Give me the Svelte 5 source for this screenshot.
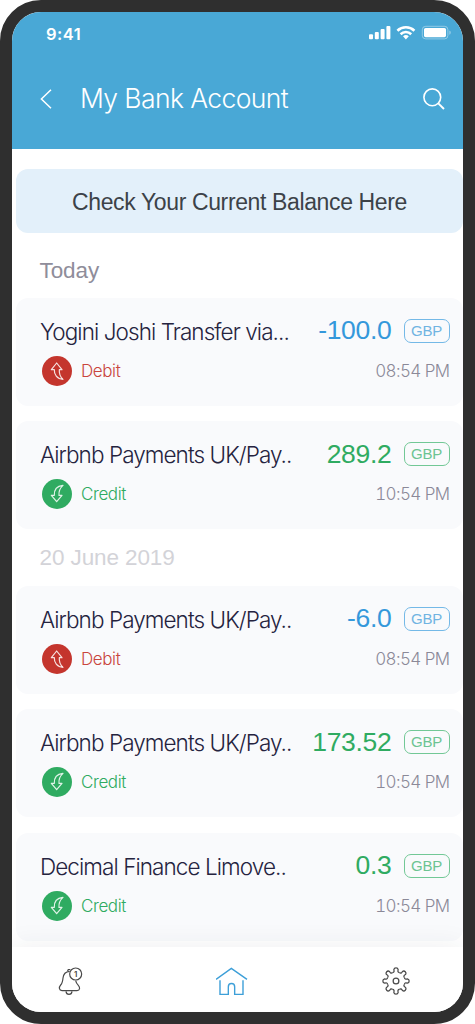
<script lang="ts">
  type Transaction = {
    name: string;
    kind: 'debit' | 'credit';
    amount: string;
    time: string;
  };

  const groups: { label: string; items: Transaction[] }[] = [
    {
      label: 'Today',
      items: [
        { name: 'Yogini Joshi Transfer via...', kind: 'debit', amount: '-100.0', time: '08:54 PM' },
        { name: 'Airbnb Payments UK/Pay..', kind: 'credit', amount: '289.2', time: '10:54 PM' },
      ],
    },
    {
      label: '20 June 2019',
      items: [
        { name: 'Airbnb Payments UK/Pay..', kind: 'debit', amount: '-6.0', time: '08:54 PM' },
        { name: 'Airbnb Payments UK/Pay..', kind: 'credit', amount: '173.52', time: '10:54 PM' },
        { name: 'Decimal Finance Limove..', kind: 'credit', amount: '0.3', time: '10:54 PM' },
      ],
    },
  ];

  const teeth = [0, 45, 90, 135, 180, 225, 270, 315];
</script>

<div class="phone">
  <header>
    <div class="status">
      <span class="clock">9:41</span>
      <svg width="84" height="16" viewBox="0 0 84 16" fill="#fff">
        <rect x="0" y="9.2" width="4" height="5" rx="1" />
        <rect x="5.8" y="7" width="4" height="7.2" rx="1" />
        <rect x="11.6" y="4" width="4" height="10.2" rx="1" />
        <rect x="17.4" y="1" width="4" height="13.2" rx="1" />
        <g fill="none" stroke="#fff" stroke-width="2.6">
          <path d="M28.4 5.7a12.3 12.3 0 0 1 17 0" />
          <path d="M31.6 9.2a7.6 7.6 0 0 1 10.6 0" />
        </g>
        <path d="M34 11.3a4.4 4.4 0 0 1 5.8 0L36.9 14.4z" />
        <rect x="53.3" y="1.3" width="25.6" height="12.6" rx="3.4" fill="none" stroke="#fff" stroke-opacity="0.4" />
        <rect x="55" y="3" width="22" height="9.2" rx="1.6" />
        <path d="M80.4 5.6c1.8.6 1.8 3.6 0 4.2z" fill-opacity="0.45" />
      </svg>
    </div>
    <div class="title-bar">
      <svg class="back" width="12" height="20" viewBox="0 0 12 20">
        <path d="M11 0.8L1.4 10L11 19.2" fill="none" stroke="#fff" stroke-width="1.5" />
      </svg>
      <h1>My Bank Account</h1>
      <svg width="22" height="22" viewBox="0 0 22 22" fill="none" stroke="#fff" stroke-width="1.6">
        <circle cx="9.3" cy="9.3" r="8.4" />
        <path d="M15.3 15.3L21 21" stroke-width="1.9" />
      </svg>
    </div>
  </header>

  <main>
    <button class="balance">Check Your Current Balance Here</button>

    {#each groups as group, i}
      <h2 class:older={i > 0}>{group.label}</h2>
      <div class="list">
        {#each group.items as item}
          <article class={item.kind}>
            <div class="row top">
              <span class="name">{item.name}</span>
              <span class="amount">{item.amount}</span>
              <span class="currency">GBP</span>
            </div>
            <div class="row bottom">
              <svg width="30" height="30" viewBox="0 0 90 90">
                <circle cx="45" cy="45" r="45" fill="currentColor" />
                {#if item.kind === 'debit'}
                  <path class="arrow" d="M44 21L28 41H37C36 55 45 69 63 70C55 63 51 52 52 41H60Z" />
                {:else}
                  <path class="arrow" d="M44 68L28 49H37C36 33 44 21 63 19C54 27 50 38 51 49H60Z" />
                {/if}
              </svg>
              <span class="kind">{item.kind === 'debit' ? 'Debit' : 'Credit'}</span>
              <time>{item.time}</time>
            </div>
          </article>
        {/each}
      </div>
    {/each}
  </main>

  <nav>
    <button aria-label="Notifications">
      <svg width="26" height="30" viewBox="176 126 78 90" fill="none" stroke="#4a4a4a" stroke-width="3.6">
        <path d="M211 142C200 143 192 151 191 162C190 174 189 178 184 183C178 190 179 200 188 200H233C242 200 243 190 237 184C232 179 230 176 229 170" />
        <path d="M205 142C205 136 209 136 213 137" />
        <path d="M200 202C201 214 217 214 218 202" />
        <circle cx="229" cy="150" r="18" />
        <text x="229" y="159" text-anchor="middle">1</text>
      </svg>
    </button>
    <button aria-label="Home">
      <svg width="32" height="30" viewBox="140 126 96 90" fill="none" stroke="#3d9fd8" stroke-width="4.2">
        <path d="M140 166L186 133L233 166" />
        <path d="M152 169V211H177V188a9.5 9.5 0 0 1 19 0V211H221V169" />
      </svg>
    </button>
    <button aria-label="Settings">
      <svg width="30" height="30" viewBox="-45 -45 90 90" fill="none" stroke="#4a4a4a" stroke-width="3.8">
        {#each teeth as angle}
          <path d="M-10.5 -25.4C-5.5 -25.5 -5 -28.5 -6.5 -34A6.6 6.6 0 0 1 6.5 -34C5 -28.5 5.5 -25.5 10.5 -25.4" transform="rotate({angle})" />
        {/each}
        <circle r="8.6" />
      </svg>
    </button>
  </nav>
</div>

<style>
  :global(body) {
    background: #fff;
  }

  .phone {
    display: flex;
    flex-direction: column;
    box-sizing: border-box;
    width: 475px;
    height: 1024px;
    border: 12px solid #2f2f2f;
    border-radius: 41px;
    overflow: hidden;
    background: #fff;
    font-family: Inter, 'Liberation Sans', sans-serif;
    font-weight: 300;
  }

  header {
    flex: none;
    box-sizing: border-box;
    height: 136.5px;
    background: #49a8d6;
    color: #fff;
  }

  .status {
    display: flex;
    align-items: center;
    justify-content: space-between;
    height: 44px;
    padding: 0 10px 0 34px;
  }

  .status svg {
    margin-bottom: 3px;
  }

  .clock {
    font-size: 16.5px;
    font-weight: 600;
    letter-spacing: 0.5px;
  }

  .title-bar {
    display: flex;
    align-items: center;
    height: 85px;
    padding: 0 18px 0 28px;
  }

  .title-bar svg {
    flex: none;
  }

  h1 {
    flex: 1;
    margin: 0 0 2px 28px;
    font-size: 26.5px;
    font-weight: 300;
    letter-spacing: -0.6px;
    white-space: nowrap;
  }

  main {
    flex: 1;
    min-height: 0;
    overflow: hidden;
    padding: 20.5px 0 0 4px;
  }

  button {
    padding: 0;
    border: none;
    background: none;
    font-family: inherit;
  }

  .balance {
    display: block;
    width: 100%;
    height: 64px;
    padding-top: 2px;
    border-radius: 12px;
    background: #e3f0fa;
    color: #3c4248;
    font-family: 'Liberation Sans', sans-serif;
    font-size: 23px;
    letter-spacing: -0.37px;
  }

  h2 {
    margin: 0;
    padding: 6px 0 0 23.5px;
    height: 58.5px;
    line-height: 64px;
    color: #8f8d9a;
    font-family: 'Liberation Sans', sans-serif;
    font-size: 22.5px;
    font-weight: 400;
    letter-spacing: -0.1px;
  }

  h2.older {
    padding-top: 0;
    height: 56.5px;
    line-height: 58px;
    color: #d3d3d8;
  }

  .list {
    display: flex;
    flex-direction: column;
    gap: 15.5px;
  }

  article {
    box-sizing: border-box;
    height: 108px;
    padding: 13px 13.5px 0 24px;
    border-radius: 12px;
    background: #f9fafc;
  }

  .row {
    display: flex;
    align-items: center;
    height: 40px;
    white-space: nowrap;
  }

  .name {
    flex: 1;
    padding-top: 1px;
    color: #25233f;
    font-size: 22.5px;
    letter-spacing: -0.93px;
  }

  .amount {
    color: #2fab61;
    font-family: 'Liberation Sans', sans-serif;
    font-size: 26.5px;
    font-weight: 400;
    letter-spacing: -0.3px;
  }

  .debit .amount {
    color: #3498db;
  }

  .currency {
    box-sizing: border-box;
    width: 46px;
    height: 24px;
    margin-left: 12px;
    border: 1.4px solid #72c896;
    border-radius: 7px;
    color: #6cc492;
    font-family: 'Liberation Sans', sans-serif;
    font-size: 15px;
    font-weight: 400;
    line-height: 22px;
    text-align: center;
    letter-spacing: -0.2px;
  }

  .debit .currency {
    border-color: #74b9e7;
    color: #70b4e2;
  }

  .bottom svg {
    margin-left: 2px;
    color: #2fab61;
  }

  .debit .bottom svg {
    color: #c4352d;
  }

  .arrow {
    fill: none;
    stroke: #fff;
    stroke-opacity: 0.85;
    stroke-width: 3.6;
    stroke-linejoin: round;
  }

  .kind {
    flex: 1;
    margin-left: 9px;
    color: #2fab61;
    font-size: 17px;
    letter-spacing: -0.4px;
  }

  .debit .kind {
    color: #c9453d;
  }

  time {
    color: #8b8998;
    font-size: 17px;
    font-variant-numeric: tabular-nums;
    letter-spacing: -0.6px;
  }

  nav {
    position: relative;
    display: flex;
    flex: none;
    align-items: center;
    justify-content: space-between;
    height: 65px;
    padding: 3px 52.5px 0 46px;
    box-sizing: border-box;
    background: #fff;
    box-shadow: 0 0 28px rgba(40, 50, 60, 0.08);
  }

  nav svg {
    display: block;
  }

  nav text {
    fill: #4a4a4a;
    stroke: none;
    font-size: 24px;
    font-weight: 600;
  }
</style>
